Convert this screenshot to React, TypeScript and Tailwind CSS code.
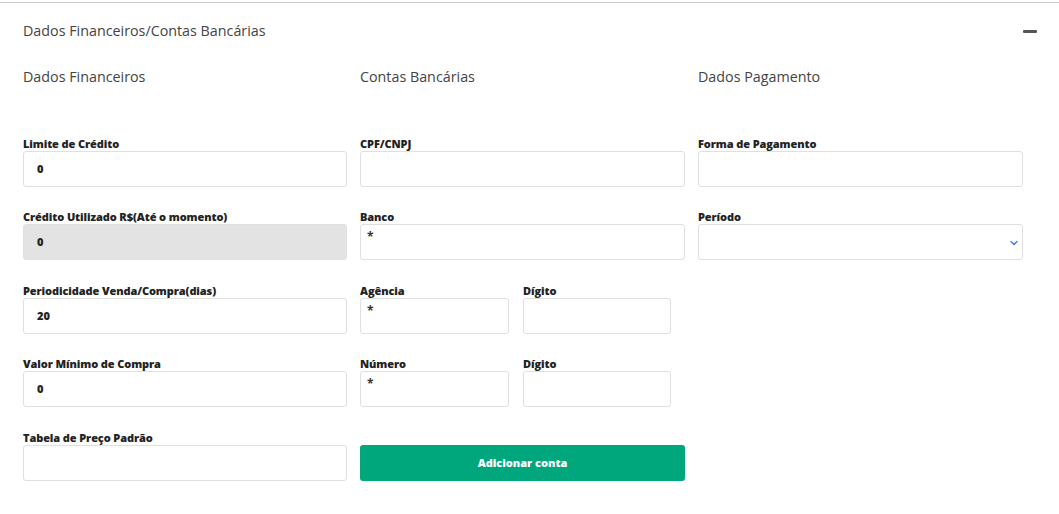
import { ChevronDown } from 'lucide-react'

const font = { fontFamily: '"Open Sans", "Noto Sans", sans-serif' }

function Field({
  label,
  value,
  disabled,
  star,
  select,
  className = '',
}: {
  label: string
  value?: string
  disabled?: boolean
  star?: boolean
  select?: boolean
  className?: string
}) {
  return (
    <div className={`flex flex-col ${className}`}>
      <label className="text-[11px] font-extrabold text-[#222] leading-[14px] tracking-[-0.1px]">{label}</label>
      <div
        className={`relative h-[36px] rounded-[3px] border border-[#e0e0e0] ${
          disabled ? 'bg-[#e3e3e3]' : 'bg-white'
        }`}
      >
        {value && (
          <span className="absolute left-[13px] top-[9px] text-[11px] font-extrabold text-[#222]">{value}</span>
        )}
        {star && <span className="absolute left-[6px] top-[3px] text-[12px] font-bold text-[#333]">*</span>}
        {select && (
          <ChevronDown className="absolute right-[2px] top-[12px] w-[12px] h-[12px] text-[#3b82f6]" strokeWidth={3} />
        )}
      </div>
    </div>
  )
}

export default function App() {
  return (
    <div className="w-[1059px] h-[514px] bg-white overflow-hidden" style={font}>
      <div className="mt-[2px] border-t border-[#c8c8ce]">
        <div className="flex items-center justify-between pl-[23px] pr-[22px] pt-[18px]">
          <h2 className="text-[14.3px] text-[#444] leading-[20px]">Dados Financeiros/Contas Bancárias</h2>
          <div className="w-[14px] h-[3px] bg-[#555] rounded-[1px]" />
        </div>

        <div className="grid grid-cols-[324px_325px_325px] gap-x-[13px] pl-[23px] pt-[26px]">
          <h3 className="text-[14.3px] text-[#444] leading-[20px]">Dados Financeiros</h3>
          <h3 className="text-[14.3px] text-[#444] leading-[20px]">Contas Bancárias</h3>
          <h3 className="text-[14.3px] text-[#444] leading-[20px]">Dados Pagamento</h3>
        </div>

        <div className="grid grid-cols-[324px_325px_325px] gap-x-[13px] pl-[23px] pt-[50px]">
          <div className="flex flex-col gap-y-[23px]">
            <Field label="Limite de Crédito" value="0" />
            <Field label="Crédito Utilizado R$(Até o momento)" value="0" disabled />
            <Field label="Periodicidade Venda/Compra(dias)" value="20" className="mt-[1px]" />
            <Field label="Valor Mínimo de Compra" value="0" />
            <Field label="Tabela de Preço Padrão" className="mt-[1px]" />
          </div>

          <div className="flex flex-col gap-y-[23px]">
            <Field label="CPF/CNPJ" />
            <Field label="Banco" star />
            <div className="flex gap-x-[14px] mt-[1px]">
              <Field label="Agência" star className="w-[149px]" />
              <Field label="Dígito" className="w-[148px]" />
            </div>
            <div className="flex gap-x-[14px]">
              <Field label="Número" star className="w-[149px]" />
              <Field label="Dígito" className="w-[148px]" />
            </div>
            <button className="mt-[15px] h-[36px] rounded-[3px] bg-[#00a67c] text-white text-[11px] font-extrabold">
              Adicionar conta
            </button>
          </div>

          <div className="flex flex-col gap-y-[23px]">
            <Field label="Forma de Pagamento" />
            <Field label="Período" select />
          </div>
        </div>
      </div>
    </div>
  )
}
